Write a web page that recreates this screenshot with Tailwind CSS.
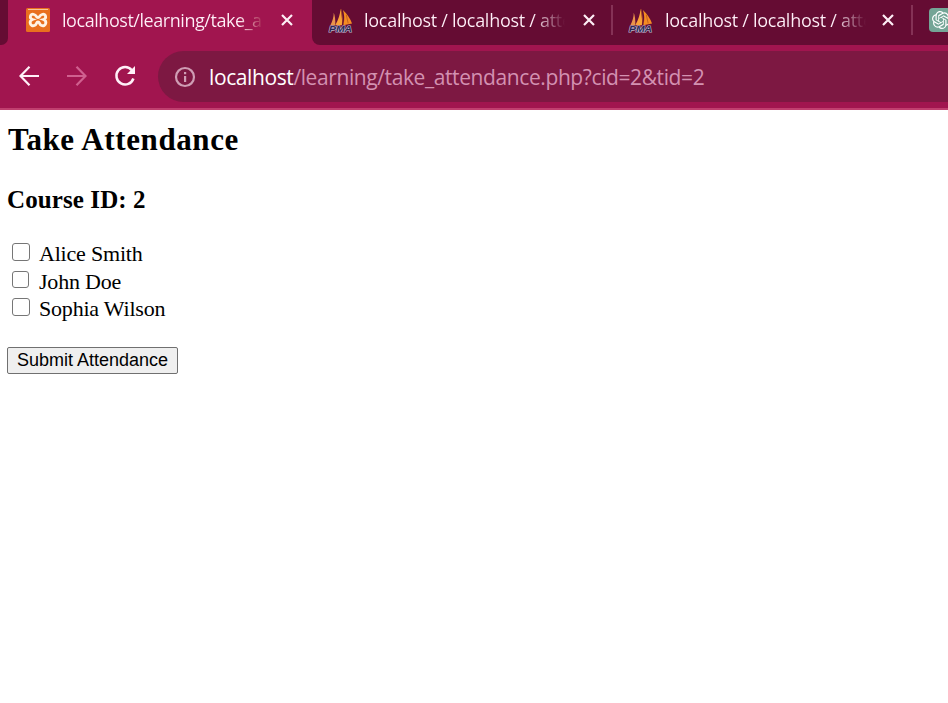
<!DOCTYPE html>
<html lang="en">
<head>
<meta charset="utf-8">
<title>Take Attendance</title>
<script src="https://cdn.jsdelivr.net/npm/@tailwindcss/browser@4"></script>
</head>
<body class="w-[948px] h-[703px] overflow-hidden bg-white text-black">
<svg class="hidden">
  <symbol id="close" viewBox="0 0 12 12"><path d="M1 1L11 11M11 1L1 11" stroke="#fdeef5" stroke-width="2.2" fill="none"/></symbol>
  <symbol id="pma" viewBox="0 0 26 26">
    <path d="M6 5Q8 10 7.500 18L2.500 18Q6 11 6 5Z" fill="#e9934b"/>
    <path d="M13 1Q15 8 14.500 18L7.500 18Q12.500 9 13 1Z" fill="#f9a13a"/>
    <path d="M15.500 2Q22 8 25 16L16 18Q18 9 15.500 2Z" fill="#f58b22"/>
    <path d="M13.500 1L16 17M19 7L21 16" stroke="#b55224" stroke-width=".8"/>
    <text x="1" y="24.500" font-family="Liberation Sans, sans-serif" font-size="9.500" font-weight="bold" font-style="italic" textLength="24" lengthAdjust="spacingAndGlyphs" fill="#2c2a52" stroke="#bfb6d0" stroke-width="1.200" paint-order="stroke">PMA</text>
  </symbol>
</svg>
<header class="font-['Open_Sans','Noto_Sans',sans-serif]">
  <div class="flex h-[45px] w-[948px] overflow-hidden bg-[#a1154f]">
    <div class="w-2 shrink-0 rounded-br-[7px] bg-[#650c33]"></div>
    <div class="flex h-10 w-[304px] shrink-0 items-center pl-[18px]">
      <svg class="size-6 shrink-0" viewBox="0 0 24 24"><rect width="24" height="24" rx="1.500" fill="#e9701e"/><path d="M2 1.500H22" stroke="#f6c39b" stroke-width="1"/><path d="M8 6.500C4 5 3 10.500 6.500 11.500C2.500 13 4 19 8.500 17.500C11 16.500 10 14 12 14C14 14 13 16.500 15.500 17.500C20 19 21.500 13 17.500 11.500C21 10.500 20 5 16 6.500C13 7.500 14 9.500 12 9.500C10 9.500 11 7.500 8 6.500Z" fill="none" stroke="#fff3e4" stroke-width="2.800"/></svg>
      <div class="ml-3 w-[201px] shrink-0 overflow-hidden whitespace-nowrap bg-linear-to-r from-[#fff0f8] from-88% to-[#a1154f] to-100% bg-clip-text text-[18px] leading-7 tracking-[-0.45px] text-transparent">localhost/learning/take_a</div>
      <svg class="ml-[18px] size-3 shrink-0"><use href="#close"/></svg>
    </div>
    <div class="flex w-[640px] shrink-0 rounded-bl-[8px] bg-[#650c33]">
      <div class="flex h-10 w-[300px] shrink-0 items-center pl-4">
        <svg class="size-[25px] shrink-0"><use href="#pma"/></svg>
        <div class="ml-[11px] w-[201px] shrink-0 overflow-hidden whitespace-nowrap bg-linear-to-r from-[#fff0f8] from-84% to-transparent to-100% bg-clip-text text-[18px] leading-7 tracking-[-0.28px] text-transparent">localhost / localhost / atte</div>
        <svg class="ml-[18px] size-3 shrink-0"><use href="#close"/></svg>
      </div>
      <div class="mt-[5px] -ml-px h-[30px] w-[2px] shrink-0 bg-[#853256]"></div>
      <div class="flex h-10 w-[299px] shrink-0 items-center pl-[15px]">
        <svg class="size-[25px] shrink-0"><use href="#pma"/></svg>
        <div class="ml-3 w-[201px] shrink-0 overflow-hidden whitespace-nowrap bg-linear-to-r from-[#fff0f8] from-84% to-transparent to-100% bg-clip-text text-[18px] leading-7 tracking-[-0.28px] text-transparent">localhost / localhost / atte</div>
        <svg class="ml-4 size-3 shrink-0"><use href="#close"/></svg>
      </div>
      <div class="mt-[5px] -ml-px h-[30px] w-[2px] shrink-0 bg-[#853256]"></div>
      <svg class="mt-2 ml-4 size-6 shrink-0" viewBox="0 0 24 24"><rect width="24" height="24" rx="4" fill="#74a596"/>
        <path transform="translate(3 3) scale(.75)" fill="#fff" d="M22.282 9.821a5.985 5.985 0 0 0-.516-4.910 6.046 6.046 0 0 0-6.510-2.900A6.065 6.065 0 0 0 4.981 4.182a5.985 5.985 0 0 0-3.998 2.900 6.046 6.046 0 0 0 .743 7.097 5.980 5.980 0 0 0 .511 4.911 6.051 6.051 0 0 0 6.515 2.900A5.985 5.985 0 0 0 13.260 24a6.056 6.056 0 0 0 5.772-4.206 5.990 5.990 0 0 0 3.998-2.900 6.056 6.056 0 0 0-.748-7.073zM13.260 22.430a4.476 4.476 0 0 1-2.876-1.041l.141-.080 4.779-2.758a.795.795 0 0 0 .392-.681v-6.737l2.020 1.169a.071.071 0 0 1 .038.052v5.583a4.504 4.504 0 0 1-4.494 4.493zM3.600 18.304a4.471 4.471 0 0 1-.535-3.014l.142.085 4.783 2.758a.771.771 0 0 0 .780 0l5.843-3.368v2.332a.080.080 0 0 1-.033.062L9.740 19.950a4.499 4.499 0 0 1-6.140-1.646zM2.340 7.896a4.485 4.485 0 0 1 2.366-1.973V11.600a.766.766 0 0 0 .388.677l5.814 3.354-2.020 1.169a.076.076 0 0 1-.071 0l-4.830-2.787A4.504 4.504 0 0 1 2.340 7.872zm16.597 3.855l-5.833-3.387L15.119 7.200a.076.076 0 0 1 .071 0l4.830 2.791a4.494 4.494 0 0 1-.676 8.105v-5.678a.790.790 0 0 0-.407-.667zm2.010-3.023l-.141-.085-4.774-2.782a.776.776 0 0 0-.785 0L9.409 9.230V6.897a.066.066 0 0 1 .028-.061l4.830-2.787a4.499 4.499 0 0 1 6.680 4.660zM8.307 12.863l-2.020-1.164a.080.080 0 0 1-.038-.057V6.075a4.499 4.499 0 0 1 7.375-3.454l-.142.081-4.778 2.758a.795.795 0 0 0-.393.681zm1.097-2.365l2.602-1.500 2.607 1.500v2.999l-2.597 1.500-2.607-1.500z"/></svg>
    </div>
  </div>
  <div class="flex h-[65px] border-b-2 border-[#c03f6f] bg-[#a1154f] pt-[6px]">
    <div class="flex h-[51px] w-[158px] shrink-0 items-center pl-[19px]">
      <svg class="size-5 -mt-px" viewBox="0 0 20 20" fill="none" stroke="#fff0f8" stroke-width="2.200"><path d="M20 10H1.500M10.500 .8L1.500 10L10.500 19.200"/></svg>
      <svg class="-mt-px ml-7 size-5" viewBox="0 0 20 20" fill="none" stroke="#d0608f" stroke-width="2.200"><path d="M0 10H18.500M9.500 .8L18.500 10L9.500 19.200"/></svg>
      <svg class="-mt-px ml-[27px] size-[22px]" viewBox="0 0 22 22"><path d="M17.800 5.200A8.700 8.700 0 1 0 19.400 13.500" fill="none" stroke="#fff0f8" stroke-width="2.500"/><path d="M21 1V9H13Z" fill="#fff0f8"/></svg>
    </div>
    <div class="flex h-[51px] w-[790px] items-center rounded-l-[26px] bg-[#7d1842] pl-[15px]">
      <svg class="mt-px size-6" viewBox="0 0 24 24"><circle cx="12" cy="12" r="9" fill="none" stroke="#cf9db4" stroke-width="2.200"/><path d="M11 7h2.200v2.200H11zM11 11h2.200v6H11z" fill="#cf9db4"/></svg>
      <div class="ml-3 whitespace-nowrap text-[21px] leading-8 tracking-[-0.4px] text-[#d391b1]"><span class="text-white">localhost</span>/learning/take_attendance.php?cid=2&amp;tid=2</div>
    </div>
  </div>
</header>
<main class="pl-[7px] font-['Liberation_Serif',serif]">
  <h2 class="pt-[12px] pl-px text-[31px] leading-9 font-bold tracking-[0.600px]">Take Attendance</h2>
  <h3 class="mt-[28px] text-[25px] leading-7 font-bold tracking-[0.100px]">Course ID: 2</h3>
  <form class="mt-[26px]">
    <div class="flex flex-col text-[22px] leading-[27.500px] tracking-[-0.200px]">
      <label class="flex h-[27.500px] items-center pl-[5px]"><input type="checkbox" class="-mt-[3px] mr-[9px] size-[18px] shrink-0 appearance-none rounded-[3px] border-[1.500px] border-[#767676] bg-white">Alice Smith</label>
      <label class="flex h-[27.500px] items-center pl-[5px]"><input type="checkbox" class="-mt-[4px] mr-[10px] size-[17px] shrink-0 appearance-none rounded-[3px] border-[1.500px] border-[#767676] bg-white">John Doe</label>
      <label class="flex h-[27.500px] items-center pl-[5px]"><input type="checkbox" class="-mt-[3px] mr-[9px] size-[18px] shrink-0 appearance-none rounded-[3px] border-[1.500px] border-[#767676] bg-white">Sophia Wilson</label>
    </div>
    <button type="button" class="mt-6 flex h-[27px] w-[171px] items-center justify-center rounded-[2px] border border-[#707070] bg-[#efefef] font-['Liberation_Sans',sans-serif] text-[18px] leading-5 whitespace-nowrap">Submit Attendance</button>
  </form>
</main>
</body>
</html>
